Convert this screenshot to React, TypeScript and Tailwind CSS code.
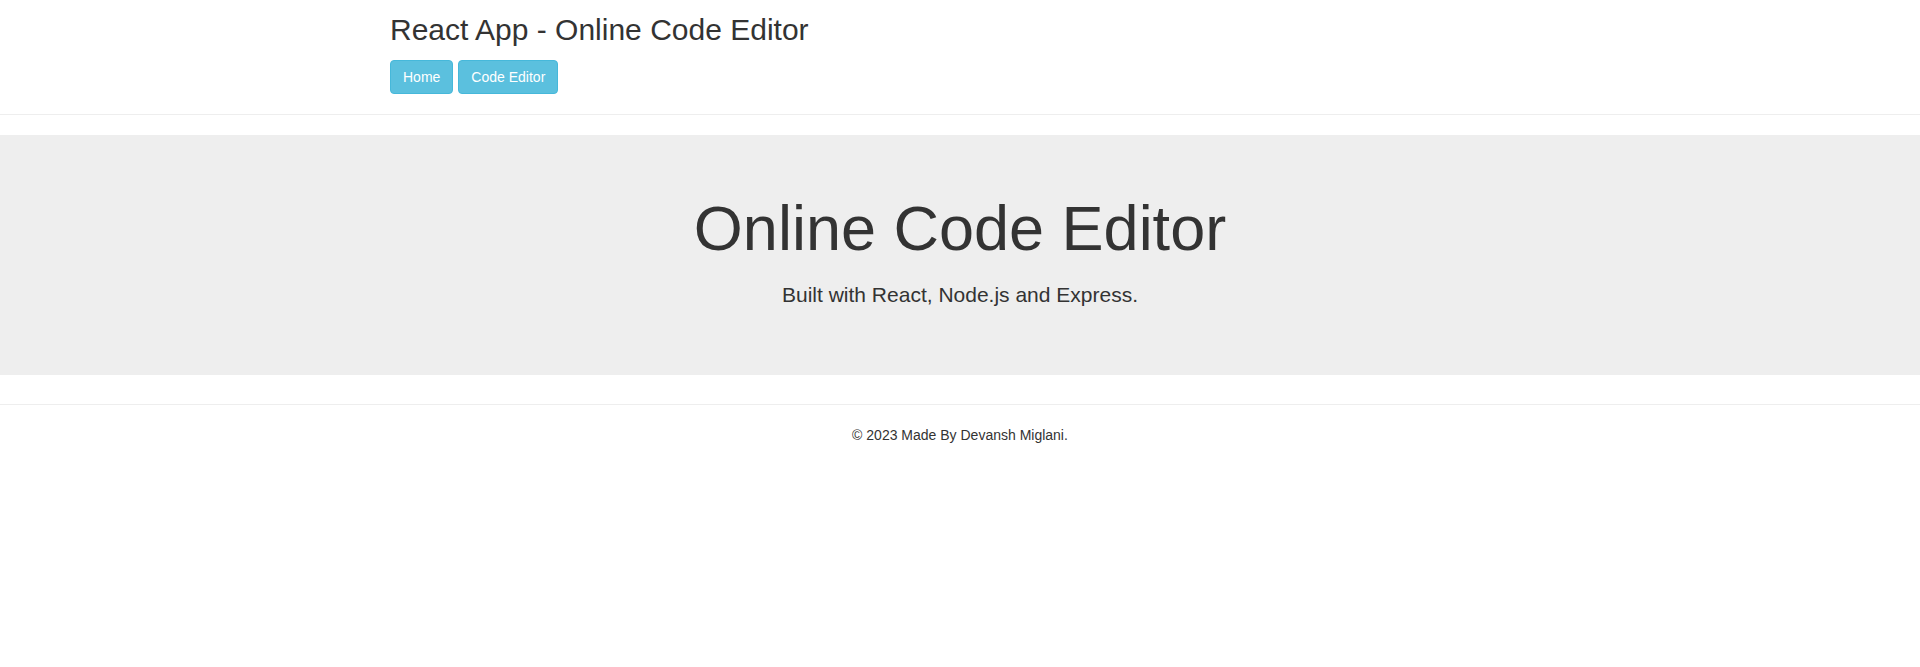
import React from 'react';

const NavButton: React.FC<{ label: string }> = ({ label }) => (
  <button className="h-[34px] px-3 text-[14px] leading-5 text-white bg-[#5bc0de] border border-[#46b8da] rounded-[4px]">
    {label}
  </button>
);

export default function App() {
  return (
    <div className="min-h-[667px] bg-white text-[#333] font-['Liberation_Sans',Arial,sans-serif]">
      <header className="mx-auto w-[1170px] px-[15px]">
        <h2 className="pt-[13px] text-[30px] leading-[33px] font-normal">React App - Online Code Editor</h2>
        <nav className="mt-[14px] flex gap-[5px]">
          <NavButton label="Home" />
          <NavButton label="Code Editor" />
        </nav>
      </header>

      <hr className="mt-[20px] mb-[20px] border-0 border-t border-[#eee]" />

      <section className="bg-[#eee] pt-[59px] pb-[65px] text-center">
        <h1 className="text-[63px] leading-[69px] font-normal">Online Code Editor</h1>
        <p className="mt-[17px] text-[21px] leading-[30px] font-light">Built with React, Node.js and Express.</p>
      </section>

      <hr className="mt-[29px] border-0 border-t border-[#eee]" />
      <footer className="mt-[20px] text-center text-[14px] leading-5">
        © 2023 Made By Devansh Miglani.
      </footer>
    </div>
  );
}
